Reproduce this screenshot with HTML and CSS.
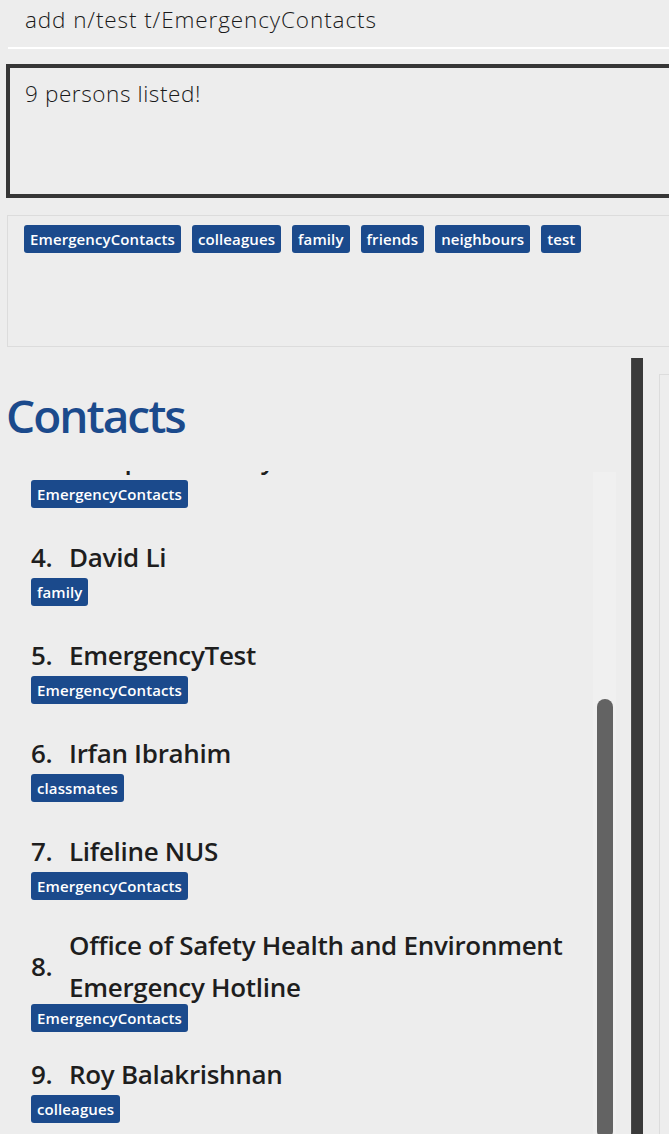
FILE: index.html
```html
<!DOCTYPE html>
<html>
<head>
<meta charset="utf-8">
<link rel="stylesheet" href="styles.css">
</head>
<body>
<div class="app">
  <div class="command">add n/test t/EmergencyContacts</div>
  <div class="result">9 persons listed!</div>
  <div class="tag-panel">
    <span class="tag">EmergencyContacts</span>
    <span class="tag">colleagues</span>
    <span class="tag">family</span>
    <span class="tag">friends</span>
    <span class="tag">neighbours</span>
    <span class="tag">test</span>
  </div>
  <div class="main">
    <div class="left">
      <h1 class="title">Contacts</h1>
      <div class="list-view">
        <div class="list">
          <div class="card">
            <div class="head"><span class="idx">3.</span><span class="name">Campus Security</span></div>
            <div class="tags"><span class="tag">EmergencyContacts</span></div>
          </div>
          <div class="card">
            <div class="head"><span class="idx">4.</span><span class="name">David Li</span></div>
            <div class="tags"><span class="tag">family</span></div>
          </div>
          <div class="card">
            <div class="head"><span class="idx">5.</span><span class="name">EmergencyTest</span></div>
            <div class="tags"><span class="tag">EmergencyContacts</span></div>
          </div>
          <div class="card">
            <div class="head"><span class="idx">6.</span><span class="name">Irfan Ibrahim</span></div>
            <div class="tags"><span class="tag">classmates</span></div>
          </div>
          <div class="card">
            <div class="head"><span class="idx">7.</span><span class="name">Lifeline NUS</span></div>
            <div class="tags"><span class="tag">EmergencyContacts</span></div>
          </div>
          <div class="card card-wrap">
            <div class="head wrap"><span class="idx">8.</span><span class="name">Office of Safety Health and Environment Emergency Hotline</span></div>
            <div class="tags"><span class="tag">EmergencyContacts</span></div>
          </div>
          <div class="card">
            <div class="head"><span class="idx">9.</span><span class="name">Roy Balakrishnan</span></div>
            <div class="tags"><span class="tag">colleagues</span></div>
          </div>
        </div>
        <div class="scroll-track"><div class="scroll-thumb"></div></div>
      </div>
    </div>
    <div class="splitter"></div>
    <div class="right-panel"></div>
  </div>
</div>
</body>
</html>
```
FILE: styles.css
```css
html, body {
  margin: 0;
  padding: 0;
}
body {
  background: #ededed;
  width: 669px;
  height: 1134px;
  overflow: hidden;
  font-family: "Open Sans", "Noto Sans", sans-serif;
}
.app {
  width: 720px;
}
.command {
  margin-left: 8px;
  height: 47px;
  padding-left: 17px;
  border-bottom: 2px solid #ffffff;
  font-size: 22.5px;
  letter-spacing: 0.9px;
  font-weight: 300;
  line-height: 40px;
  color: #1a1a1a;
}
.result {
  margin: 15px 0 0 6px;
  height: 126px;
  border: 4px solid #363636;
  padding-left: 15px;
  font-size: 22.5px;
  letter-spacing: 0.6px;
  font-weight: 300;
  line-height: 52px;
  color: #1a1a1a;
}
.tag-panel {
  margin: 17px 0 0 7px;
  height: 132px;
  border: 1px solid #dcdcdc;
  padding: 9px 0 0 16px;
  box-sizing: border-box;
  display: flex;
  align-items: flex-start;
  gap: 11px;
}
.tag {
  display: inline-block;
  height: 28px;
  line-height: 28px;
  padding: 0 6px;
  border-radius: 3px;
  background: #1b4a8c;
  color: #ffffff;
  font-size: 15px;
  letter-spacing: 0.1px;
  font-weight: 600;
  white-space: nowrap;
}
.main {
  display: flex;
  margin-top: 11px;
  height: 800px;
}
.left {
  width: 632px;
  display: flex;
  flex-direction: column;
}
.title {
  margin: 28px 0 0 6px;
  font-size: 46px;
  letter-spacing: -2px;
  line-height: 58px;
  font-weight: 600;
  color: #1b4a8c;
}
.list-view {
  margin-top: 27px;
  height: 664px;
  overflow: hidden;
  display: flex;
}
.list {
  flex: 1;
  padding-left: 31px;
  margin-top: -33px;
}
.card {
  margin-bottom: 28px;
}
.card-wrap {
  margin-bottom: 21px;
}
.head {
  display: flex;
  align-items: center;
  line-height: 42px;
  font-size: 26px;
  letter-spacing: -0.3px;
  font-weight: 600;
  color: #1e1e1e;
}
.head.wrap .name {
  margin: -4px 0;
}
.idx {
  flex: none;
  width: 38px;
}
.name {
  flex: 1;
}
.tags {
  display: flex;
  gap: 8px;
}
.scroll-track {
  flex: none;
  width: 23px;
  margin: 1px 15px 0 0;
  background: #f0f0f0;
  padding: 0 3px 0 4px;
  box-sizing: border-box;
}
.scroll-thumb {
  margin-top: 227px;
  height: 440px;
  border-radius: 8px;
  background: #636363;
}
.splitter {
  flex: none;
  width: 12px;
  background: #3a3a3a;
  border-left: 1px solid #4a4a4a;
  box-sizing: border-box;
}
.right-panel {
  flex: none;
  margin: 16px 0 0 16px;
  width: 60px;
  border-left: 1px solid #dcdcdc;
  border-top: 1px solid #dcdcdc;
}
```
